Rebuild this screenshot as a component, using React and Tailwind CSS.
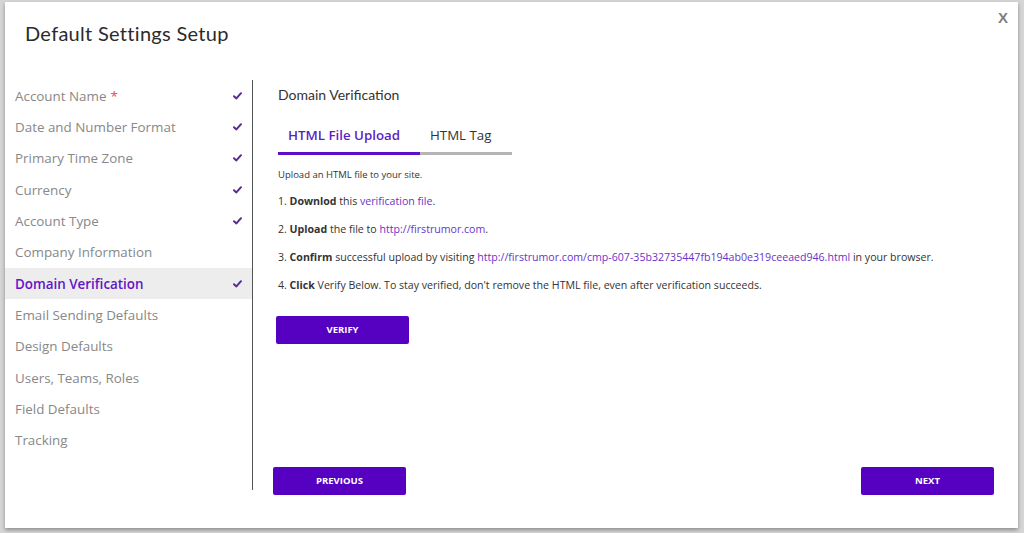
import React from "react";

const steps = [
  { label: "Account Name", required: true, done: true },
  { label: "Date and Number Format", done: true },
  { label: "Primary Time Zone", done: true },
  { label: "Currency", done: true },
  { label: "Account Type", done: true },
  { label: "Company Information" },
  { label: "Domain Verification", done: true, active: true },
  { label: "Email Sending Defaults" },
  { label: "Design Defaults" },
  { label: "Users, Teams, Roles" },
  { label: "Field Defaults" },
  { label: "Tracking" },
];

function Check() {
  return (
    <svg width="9" height="8" viewBox="0 0 9 8" className="text-[#5b2a91]">
      <path d="M1 4.2 L3.4 6.4 L8 1.2" fill="none" stroke="currentColor" strokeWidth="2" strokeLinecap="round" strokeLinejoin="round" />
    </svg>
  );
}

export default function App() {
  const [tab, setTab] = React.useState("file");

  return (
    <div className="w-[1024px] h-[533px] bg-[#d6d6d6] pt-[2px] pl-[5px] font-['Open_Sans',sans-serif] overflow-hidden">
      <div className="relative w-[1013px] h-[526px] bg-white shadow-[0_2px_4px_rgba(0,0,0,0.35)] flex flex-col">
        <button className="absolute right-[10px] top-[8px] text-[#808080] text-[15px] font-bold leading-none font-['Liberation_Sans',sans-serif]">
          X
        </button>

        <h2 className="pl-5 pt-[16px] h-[78px] text-[20px] text-[#2b2b2b] font-['Lato',sans-serif] tracking-[0.3px]">
          Default Settings Setup
        </h2>

        <div className="flex flex-1">
          <div className="w-[248px] h-[410px] border-r border-[#555]">
            {steps.map(s => (
              <div
                key={s.label}
                className={`h-[31.33px] flex items-center justify-between pl-[10px] pr-[10px] text-[13.4px] ${
                  s.active ? "bg-[#ededed] text-[#6414c6] font-semibold" : "text-[#888]"
                }`}
              >
                <span>
                  {s.label}
                  {s.required && <span className="text-[#f0474f] ml-1">*</span>}
                </span>
                {s.done && <Check />}
              </div>
            ))}
          </div>

          <div className="flex-1 flex flex-col pl-[25px] pr-6">
            <div className="text-[14px] text-[#333] font-['Lato',sans-serif] pt-[4px]">Domain Verification</div>

            <div className="flex mt-[14px] w-[234px] text-[13.3px]">
              <button
                onClick={() => setTab("file")}
                className={`w-[142px] h-[36px] pl-[10px] text-left border-b-[3px] ${
                  tab === "file" ? "border-[#5c0fc8] text-[#5c1fc0] font-semibold" : "border-[#b5b5b5] text-[#333]"
                }`}
              >
                HTML File Upload
              </button>
              <button
                onClick={() => setTab("tag")}
                className={`flex-1 h-[36px] pl-[10px] text-left border-b-[3px] ${
                  tab === "tag" ? "border-[#5c0fc8] text-[#5c1fc0] font-semibold" : "border-[#b5b5b5] text-[#333]"
                }`}
              >
                HTML Tag
              </button>
            </div>

            <div className="text-[#333]">
              <p className="text-[9.5px] mt-[13px]">Upload an HTML file to your site.</p>
              <p className="text-[10.6px] mt-[12px]">
                1. <b>Downlod</b> this <span className="text-[#6a32c9]">verification file</span>.
              </p>
              <p className="text-[10.6px] mt-[12px]">
                2. <b>Upload</b> the file to <span className="text-[#6a32c9]">http://firstrumor.com</span>.
              </p>
              <p className="text-[10.6px] mt-[12px]">
                3. <b>Confirm</b> successful upload by visiting{" "}
                <span className="text-[#6a32c9]">http://firstrumor.com/cmp-607-35b32735447fb194ab0e319ceeaed946.html</span> in your browser.
              </p>
              <p className="text-[10.6px] mt-[12px]">
                4. <b>Click</b> Verify Below. To stay verified, don't remove the HTML file, even after verification succeeds.
              </p>
            </div>

            <button className="mt-[22px] -ml-[2px] w-[133px] h-[28px] rounded-[2px] bg-[#5600c2] text-white text-[9.5px] font-bold">
              VERIFY
            </button>

            <div className="flex justify-between mt-auto mb-[33px] -ml-[5px]">
              <button className="w-[133px] h-[28px] rounded-[2px] bg-[#5600c2] text-white text-[9.5px] font-bold">
                PREVIOUS
              </button>
              <button className="w-[133px] h-[28px] rounded-[2px] bg-[#5600c2] text-white text-[9.5px] font-bold">
                NEXT
              </button>
            </div>
          </div>
        </div>
      </div>
    </div>
  );
}
